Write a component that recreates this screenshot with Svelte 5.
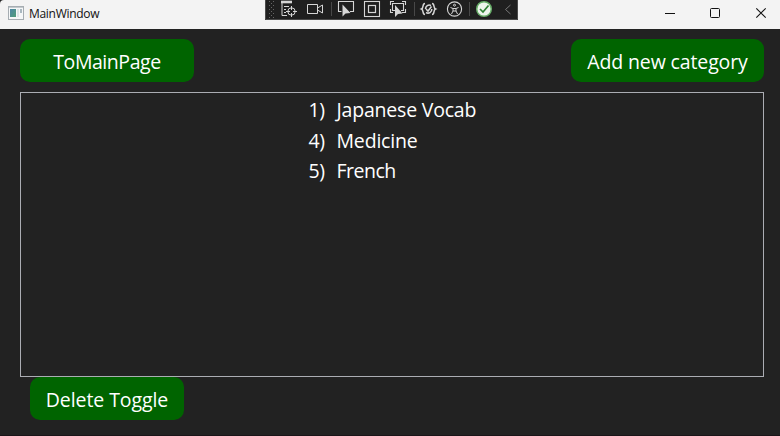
<script>
  const categories = [
    { id: 1, name: 'Japanese Vocab', spacing: -0.2 },
    { id: 4, name: 'Medicine', spacing: -0.18 },
    { id: 5, name: 'French', spacing: -0.5 }
  ];
</script>

<div class="window">
  <header class="titlebar">
    <svg class="app-icon" width="16" height="14" viewBox="0 0 16 14">
      <defs>
        <linearGradient id="pane" x1="0" y1="0" x2="1" y2="1">
          <stop offset="0" stop-color="#4d86a6" />
          <stop offset="1" stop-color="#4f9d78" />
        </linearGradient>
      </defs>
      <rect x=".5" y=".5" width="15" height="13" fill="#f5f7f8" stroke="#a6adb2" />
      <path d="M1 1.5H15" stroke="#c3c9cd" />
      <rect x="2" y="3" width="6" height="8" fill="url(#pane)" />
      <rect x="9" y="3" width="2" height="8" fill="#dce3e6" />
      <rect x="12" y="3" width="2" height="4" fill="#aab8c0" />
    </svg>
    <span class="title">MainWindow</span>
    <div class="controls">
      <svg width="46" height="28" viewBox="0 0 46 28"><path d="M15 13.5H25" stroke="#111" /></svg>
      <svg width="46" height="28" viewBox="0 0 46 28"><rect x="14.5" y="8.5" width="9" height="9" rx="1" fill="none" stroke="#111" /></svg>
      <svg width="46" height="28" viewBox="0 0 46 28"><path d="M14.3 8.3L23.7 17.7M23.7 8.3L14.3 17.7" stroke="#111" stroke-width="1.1" /></svg>
    </div>
  </header>

  <svg class="debugbar" width="253" height="20" viewBox="0 0 253 20" fill="none" stroke="#d6d6d6">
    <rect width="253" height="20" fill="#1f1f1f" stroke="none" />
    <path d="M.5 0V19.5H252.5V0" stroke="#4a4a4a" />
    <path d="M4.5 1V18M8.5 1V18" stroke="#666" stroke-dasharray="1 3" />
    <path d="M6.5 3V18" stroke="#666" stroke-dasharray="1 3" />
    <!-- live visual tree -->
    <path d="M16 2H27" stroke-width="2.6" />
    <path d="M17 3V15.5H22M19 6.5H24M19 9.5H21M19 12.5H21" />
    <circle cx="26.5" cy="11.5" r="3.7" />
    <path d="M26.5 6V10M26.5 13V17M21 11.5H25M28 11.5H32" />
    <!-- camera -->
    <path d="M42.5 4.5H52.5V13.5H42.5ZM52.5 8L57.5 5V13L52.5 10" />
    <path d="M66.5 2V16" stroke="#484848" />
    <!-- select element -->
    <path d="M76.5 11.5H73.5V1.5H88.5V11.5H85" stroke-width="1.1" />
    <path d="M77.5 4.5V16.5L80.5 13.5L85.5 13Z" fill="#d6d6d6" stroke="none" />
    <!-- layout adorners -->
    <rect x="99.5" y="1.5" width="15" height="15" stroke-width="1.1" />
    <rect x="103.5" y="5.5" width="7" height="7" stroke-width="1.2" />
    <!-- track focused element -->
    <path d="M129 1.5H125.5V5M137 1.5H140.5V5M125.5 9V12.5H128M140.500 9V12.5H137M130 10.5H127.5V3.5H138.5V10.5H136" stroke-width="1.1" />
    <path d="M130 5V17L133 14L137.5 13.5Z" fill="#d6d6d6" stroke="none" />
    <path d="M149.5 2V16" stroke="#484848" />
    <!-- binding failures -->
    <path d="M160 3.5C157 3.5 159 8 156.500 9C159 10 157 14.500 160 14.500M167 3.500C170 3.500 168 8 170.500 9C168 10 170 14.500 167 14.500" stroke-width="1.5" />
    <path d="M160.500 9A3.800 3.800 0 0 1 166 5.500M166.800 9A3.800 3.800 0 0 1 161 12.500M161 9L163 11L166.500 6.500" stroke-width="1.5" />
    <!-- accessibility -->
    <circle cx="189.5" cy="9" r="7.1" stroke-width="1.1" />
    <circle cx="189.5" cy="5.2" r="1" />
    <path d="M185.500 7.500L188 8.500V11L186.500 14M193.500 7.500L191 8.500V11L192.500 14M188 8.500H191M188 11H191" />
    <path d="M204.5 2V16" stroke="#484848" />
    <!-- hot reload -->
    <circle cx="219" cy="9" r="7.3" fill="#edf5ed" stroke="#67ae68" stroke-width="1.5" />
    <path d="M215 9L218 12L223.5 5.5" stroke="#2f8135" stroke-width="1.7" />
    <path d="M245.5 5L240.5 9.5L245.5 14" stroke="#777" />
  </svg>

  <main>
    <div class="actions">
      <button class="home"><span>ToMainPage</span></button>
      <button class="add"><span>Add new category</span></button>
    </div>
    <div class="listbox">
      <ul>
        {#each categories as c}
          <li><span class="num">{c.id})</span><span style="letter-spacing: {c.spacing}px">{c.name}</span></li>
        {/each}
      </ul>
    </div>
    <button class="delete"><span>Delete Toggle</span></button>
  </main>
</div>

<style>
  :global(body) { background: #222; overflow: hidden; }
  .window {
    position: relative;
    box-sizing: border-box;
    width: 780px;
    height: 436px;
    background: #222;
    border-bottom: 1px solid #1b1519;
    font-family: "Open Sans", "Noto Sans", sans-serif;
  }
  .titlebar {
    display: flex;
    align-items: center;
    box-sizing: border-box;
    height: 29px;
    padding-left: 8px;
    background: #f3f3f3;
    border-top-left-radius: 4px;
  }
  .app-icon { margin-top: -3px; }
  .title { margin: -1px 0 0 5px; font-size: 12px; line-height: 16px; color: #111; letter-spacing: -0.3px; }
  .controls { display: flex; height: 28px; margin: 0 -8px 0 auto; align-self: flex-start; }
  .debugbar { position: absolute; left: 265px; top: 0; }
  main { display: flex; flex-direction: column; padding: 10px 16px 0 20px; }
  .actions { display: flex; justify-content: space-between; }
  button {
    height: 43px;
    padding: 3px 0 0;
    border: 0;
    border-radius: 10px;
    background: #006400;
    color: #fff;
    font: 19.5px/28px "Open Sans", "Noto Sans", sans-serif;
    white-space: nowrap;
  }
  .home { width: 174px; letter-spacing: -0.45px; }
  .add { width: 193px; letter-spacing: -0.13px; }
  .delete { width: 154px; margin-left: 10px; letter-spacing: -0.08px; }
  .listbox { box-sizing: border-box; height: 285px; margin-top: 10px; border: 1px solid #abadb3; }
  ul { margin: 0 0 0 287.500px; padding: 2px 0 0; list-style: none; }
  li { display: flex; height: 30.6px; line-height: 30.6px; font-size: 19.5px; color: #fff; white-space: nowrap; }
  .num { width: 28px; letter-spacing: -0.3px; }
</style>
